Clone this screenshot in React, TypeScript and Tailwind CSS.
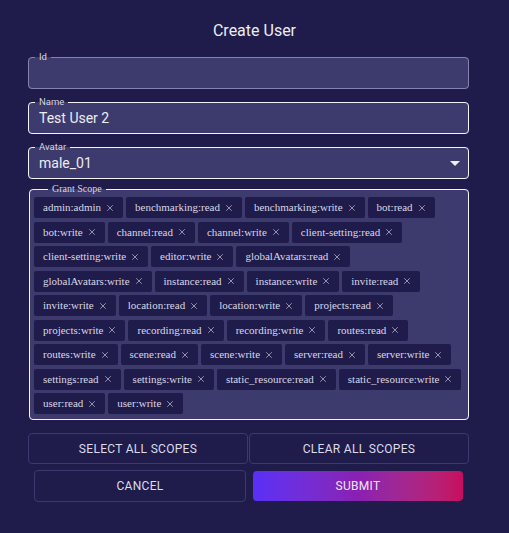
import { X } from 'lucide-react';

const scopeRows: string[][] = [
  ['admin:admin', 'benchmarking:read', 'benchmarking:write', 'bot:read'],
  ['bot:write', 'channel:read', 'channel:write', 'client-setting:read'],
  ['client-setting:write', 'editor:write', 'globalAvatars:read'],
  ['globalAvatars:write', 'instance:read', 'instance:write', 'invite:read'],
  ['invite:write', 'location:read', 'location:write', 'projects:read'],
  ['projects:write', 'recording:read', 'recording:write', 'routes:read'],
  ['routes:write', 'scene:read', 'scene:write', 'server:read', 'server:write'],
  ['settings:read', 'settings:write', 'static_resource:read', 'static_resource:write'],
  ['user:read', 'user:write'],
];

const Field = ({
  label,
  value,
  active,
  select,
}: {
  label: string;
  value?: string;
  active?: boolean;
  select?: boolean;
}) => (
  <fieldset
    className={`rounded-[4px] border bg-[#3d3b6d] ${
      active ? 'border-[#f2f2f6]' : 'border-[#8583ad]'
    }`}
  >
    <legend className="ml-[6px] px-[4px] text-[9.5px] leading-[10px] text-[#d4d4e2]">
      {label}
    </legend>
    <div className="flex h-[26px] items-center pl-[10px] pr-[8px] pb-[4px] text-[14px] text-[#ececf2]">
      <span className="flex-1">{value}</span>
      {select && (
        <svg width="10" height="5" viewBox="0 0 10 5">
          <path d="M0 0 L10 0 L5 5 Z" fill="#f2f2f6" />
        </svg>
      )}
    </div>
  </fieldset>
);

const Chip = ({ text }: { text: string }) => (
  <div className="flex h-[21px] items-center gap-[4px] rounded-[2px] bg-[#1f1b4b] pl-[9px] pr-[8px] font-['Liberation_Serif',serif] text-[11px] text-[#d8d8e6]">
    <span>{text}</span>
    <X size={10} strokeWidth={1.5} className="text-[#d8d8e6]" />
  </div>
);

export default function App() {
  return (
    <div className="min-h-screen w-full bg-[#1f1b4b] pt-[21px] font-['Roboto','Liberation_Sans',sans-serif]">
      <h1 className="text-center text-[16px] leading-[20px] text-[#ececf2]">Create User</h1>

      <div className="ml-[28px] mt-[11px] flex w-[441px] flex-col gap-[8px]">
        <Field label="Id" />
        <Field label="Name" value="Test User 2" active />
        <Field label="Avatar" value="male_01" active select />

        <fieldset className="ml-[1px] mt-[-3px] w-[440px] rounded-[4px] border border-[#f2f2f6] bg-[#3d3b6d] pb-[5px] pl-[4px]">
          <legend className="ml-[14px] px-[4px] font-['Liberation_Serif',serif] text-[10px] leading-[10px] text-[#d4d4e2]">
            Grant Scope
          </legend>
          <div className="mt-[3px] flex flex-col gap-[3.5px]">
            {scopeRows.map((row, i) => (
              <div key={i} className="flex gap-[3px]">
                {row.map((s) => (
                  <Chip key={s} text={s} />
                ))}
              </div>
            ))}
          </div>
        </fieldset>

        <div className="mt-[5px] flex gap-[1px]">
          <button className="h-[31px] flex-1 rounded-[4px] border border-[#3c3970] text-[12px] tracking-[0.3px] text-[#dcdcea]">
            SELECT ALL SCOPES
          </button>
          <button className="h-[31px] flex-1 rounded-[4px] border border-[#3c3970] text-[12px] tracking-[0.3px] text-[#dcdcea]">
            CLEAR ALL SCOPES
          </button>
        </div>

        <div className="mt-[-2px] flex items-center gap-[7px] px-[6px]">
          <button className="h-[32px] flex-1 rounded-[4px] border border-[#3c3970] text-[12px] tracking-[0.3px] text-[#dcdcea]">
            CANCEL
          </button>
          <button className="h-[30px] flex-1 rounded-[4px] bg-linear-to-r from-[#5a2ff7] via-[#8a1fb3] to-[#c70b5e] text-[12px] tracking-[0.3px] text-[#f2e6f2]">
            SUBMIT
          </button>
        </div>
      </div>
    </div>
  );
}
